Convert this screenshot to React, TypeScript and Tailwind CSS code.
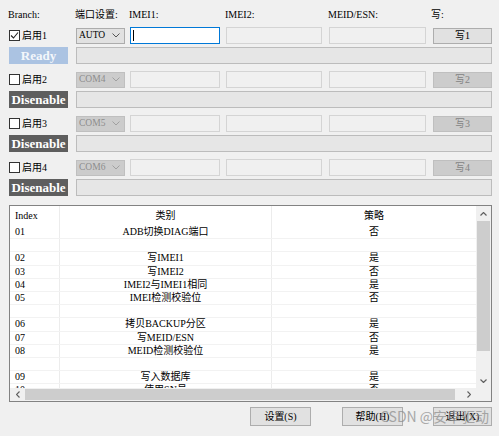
import React from "react";

const FONT = "font-['Liberation_Serif','Noto_Sans_CJK_SC',serif]";

function Check({ checked }: { checked?: boolean }) {
  return (
    <div className="w-[11px] h-[11px] border border-[#333333] bg-white flex items-center justify-center shrink-0">
      {checked && (
        <svg width="9" height="9" viewBox="0 0 9 9">
          <polyline points="1,4.5 3.5,7 8,1.5" fill="none" stroke="#222" strokeWidth="1.1" />
        </svg>
      )}
    </div>
  );
}

function Chevron({ color }: { color: string }) {
  return (
    <svg width="8" height="5" viewBox="0 0 8 5">
      <polyline points="0.5,0.5 4,4 7.5,0.5" fill="none" stroke={color} strokeWidth="1" />
    </svg>
  );
}

function Group({ n, active }: { n: number; active?: boolean }) {
  return (
    <div className="flex flex-col">
      <div className="flex items-center h-[17px]">
        <div className="w-[67px] flex items-center">
          <Check checked={active} />
          <span className="ml-[2px] text-[10px] leading-none">启用{n}</span>
        </div>
        {active ? (
          <div className="w-[49px] h-[16px] bg-[#e1e1e1] border border-[#acacac] flex items-center justify-between pl-[2px] pr-[4px]">
            <span className="text-[9.5px] leading-none">AUTO</span>
            <Chevron color="#555" />
          </div>
        ) : (
          <div className="w-[49px] h-[16px] bg-[#cccccc] border border-[#bfbfbf] flex items-center justify-between pl-[2px] pr-[4px]">
            <span className="text-[9.5px] leading-none text-[#8d8d8d]">COM{n + 2}</span>
            <Chevron color="#a0a0a0" />
          </div>
        )}
        {active ? (
          <div className="ml-[5px] w-[90px] h-[17px] bg-white border border-[#0078d7] flex items-center pl-[2px]">
            <div className="w-px h-[11px] bg-black" />
          </div>
        ) : (
          <div className="ml-[5px] w-[90px] h-[17px] bg-[#f0f0f0] border border-[#d4d4d4]" />
        )}
        <div className="ml-[6px] w-[96px] h-[17px] bg-[#f0f0f0] border border-[#d4d4d4]" />
        <div className="ml-[7px] w-[97px] h-[17px] bg-[#f0f0f0] border border-[#d4d4d4]" />
        {active ? (
          <div className="ml-[7px] w-[59px] h-[16px] bg-[#e1e1e1] border border-[#adadad] flex items-center justify-center text-[10px] leading-none">
            写1
          </div>
        ) : (
          <div className="ml-[7px] w-[59px] h-[16px] bg-[#cccccc] border border-[#bfbfbf] flex items-center justify-center text-[10px] leading-none text-[#838383]">
            写{n}
          </div>
        )}
      </div>
      <div className="flex items-center h-[17px] mt-[3px]">
        {active ? (
          <div className="w-[59px] h-[17px] bg-[#abc3e2] flex items-center justify-center text-[13px] leading-none font-bold text-[#f4f7fb]">
            Ready
          </div>
        ) : (
          <div className="w-[59px] h-[17px] bg-[#5e5e5e] flex items-center justify-center text-[13px] leading-none font-bold text-white">
            Disenable
          </div>
        )}
        <div className="ml-[8px] w-[416px] h-[17px] bg-[#e6e6e6] border border-[#bcbcbc]" />
      </div>
    </div>
  );
}

const rows: [string, string, string][] = [
  ["01", "ADB切换DIAG端口", "否"],
  ["", "", ""],
  ["02", "写IMEI1", "是"],
  ["03", "写IMEI2", "否"],
  ["04", "IMEI2与IMEI1相同", "是"],
  ["05", "IMEI检测校验位", "否"],
  ["", "", ""],
  ["06", "拷贝BACKUP分区", "是"],
  ["07", "写MEID/ESN", "否"],
  ["08", "MEID检测校验位", "是"],
  ["", "", ""],
  ["09", "写入数据库", "是"],
  ["10", "使用SN号", "否"],
];

export default function App() {
  return (
    <div className={`w-[499px] h-[436px] bg-[#f0f0f0] overflow-hidden relative text-black ${FONT}`}>
      <div className="pl-[9px] pt-[9px] flex flex-col">
        <div className="flex items-center h-[12px] text-[10px] leading-none">
          <span className="w-[67px] -ml-px">Branch:</span>
          <span className="w-[54px]">端口设置:</span>
          <span className="w-[96px]">IMEI1:</span>
          <span className="w-[103px]">IMEI2:</span>
          <span className="w-[103px]">MEID/ESN:</span>
          <span>写:</span>
        </div>
        <div className="mt-[6px] flex flex-col gap-[7px]">
          <Group n={1} active />
          <Group n={2} />
          <Group n={3} />
          <Group n={4} />
        </div>
        <div className="mt-[9px] w-[483px] h-[197px] border border-[#828282] bg-white flex flex-col">
          <div className="flex h-[182px]">
            <div className="flex-1 overflow-hidden flex flex-col text-[10px] leading-none">
              <div className="flex h-[20px] items-center shrink-0">
                <div className="w-[50px] h-full pl-[5px] flex items-center border-r border-[#ececec]">Index</div>
                <div className="w-[212px] h-full flex items-center justify-center border-r border-[#ececec]">类别</div>
                <div className="flex-1 h-full flex items-center justify-center">策略</div>
              </div>
              {rows.map((r, i) => (
                <div key={i} className="flex h-[13.2px] items-center shrink-0 border-b border-[#f2f2f2]">
                  <div className="w-[50px] h-full pl-[5px] flex items-center border-r border-[#ececec]">{r[0]}</div>
                  <div className="w-[212px] h-full flex items-center justify-center border-r border-[#ececec]">{r[1]}</div>
                  <div className="flex-1 h-full flex items-center justify-center">{r[2]}</div>
                </div>
              ))}
            </div>
            <div className="w-[15px] bg-[#f0f0f0] flex flex-col items-center">
              <div className="h-[15px] w-full flex items-center justify-center">
                <svg width="7" height="4" viewBox="0 0 7 4">
                  <polyline points="0.5,3.5 3.5,0.5 6.5,3.5" fill="none" stroke="#606060" strokeWidth="1.2" />
                </svg>
              </div>
              <div className="w-[13px] h-[130px] bg-[#cdcdcd]" />
              <div className="flex-1" />
              <div className="h-[15px] w-full flex items-center justify-center">
                <svg width="7" height="4" viewBox="0 0 7 4">
                  <polyline points="0.5,0.5 3.5,3.5 6.5,0.5" fill="none" stroke="#606060" strokeWidth="1.2" />
                </svg>
              </div>
            </div>
          </div>
          <div className="flex h-[13px] bg-[#f0f0f0] items-center">
            <div className="w-[15px] h-full flex items-center justify-center">
              <svg width="4" height="7" viewBox="0 0 4 7">
                <polyline points="3.5,0.5 0.5,3.5 3.5,6.5" fill="none" stroke="#606060" strokeWidth="1.2" />
              </svg>
            </div>
            <div className="w-[430px] h-[11px] bg-[#cdcdcd]" />
            <div className="flex-1" />
            <div className="w-[15px] h-full flex items-center justify-center">
              <svg width="4" height="7" viewBox="0 0 4 7">
                <polyline points="0.5,0.5 3.5,3.5 0.5,6.5" fill="none" stroke="#606060" strokeWidth="1.2" />
              </svg>
            </div>
            <div className="w-[15px] h-full" />
          </div>
        </div>
        <div className="mt-[5px] flex items-center text-[10px] leading-none">
          <div className="ml-[241px] w-[61px] h-[19px] bg-[#e1e1e1] border border-[#adadad] flex items-center justify-center">设置(S)</div>
          <div className="ml-[31px] w-[61px] h-[19px] bg-[#e1e1e1] border border-[#adadad] flex items-center justify-center">帮助(H)</div>
          <div className="ml-[30px] w-[59px] h-[19px] bg-[#e1e1e1] border border-[#adadad] flex items-center justify-center">退出(X)</div>
        </div>
      </div>
      <div className="absolute left-[380px] top-[409px] text-[14px] leading-none text-[#8a8a8a] opacity-70 font-['Noto_Sans_CJK_SC',sans-serif] whitespace-nowrap">
        CSDN @安卓驱动
      </div>
    </div>
  );
}
